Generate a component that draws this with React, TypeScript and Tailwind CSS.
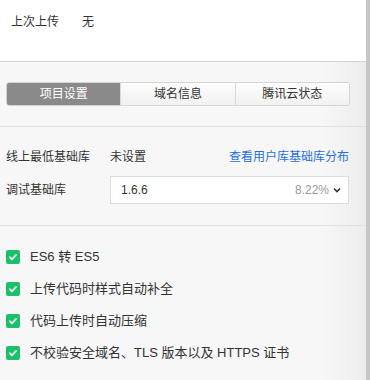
import React from 'react';

const font = { fontFamily: '"Liberation Sans", "Noto Sans CJK SC", sans-serif' };

const checks = [
  'ES6 转 ES5',
  '上传代码时样式自动补全',
  '代码上传时自动压缩',
  '不校验安全域名、TLS 版本以及 HTTPS 证书',
];

const CheckBox: React.FC = () => (
  <span className="flex h-[14px] w-[14px] shrink-0 items-center justify-center rounded-[2px] bg-[#1bc16a]">
    <svg width="10" height="10" viewBox="0 0 10 10" fill="none">
      <path d="M1.8 5.2 L4 7.3 L8.2 2.8" stroke="white" strokeWidth="1.6" strokeLinecap="round" strokeLinejoin="round" />
    </svg>
  </span>
);

export default function App() {
  return (
    <div className="flex h-[380px] w-[370px] overflow-hidden text-[#333]" style={font}>
      <div className="flex flex-1 flex-col">
        <div className="h-[62px] shrink-0 border-b border-[#d2d2d2] bg-white">
          <div className="flex items-center px-[11px] pt-[12px] text-[12px] leading-[20px]">
            <span className="w-[71px]">上次上传</span>
            <span>无</span>
          </div>
        </div>

        <div className="flex flex-1 flex-col bg-[linear-gradient(to_right,#f7f7f7_88%,#ececec)]">
          <div className="px-[6px] pb-[20px] pt-[20px]">
            <div className="flex h-[24px] w-[344px] overflow-hidden rounded-[3px] border border-[#d4d4d4] text-[12px]">
              <div className="flex flex-1 items-center justify-center bg-[#8a8a8a] text-white">项目设置</div>
              <div className="flex flex-1 items-center justify-center border-l border-[#d9d9d9] bg-[linear-gradient(to_bottom,#fdfdfd,#f1f1f1)]">域名信息</div>
              <div className="flex flex-1 items-center justify-center border-l border-[#d9d9d9] bg-[linear-gradient(to_bottom,#fdfdfd,#f1f1f1)]">腾讯云状态</div>
            </div>
          </div>

          <div className="border-t border-[#e0e0e0] px-[6px] pb-[21px] pt-[20px] text-[12px]">
            <div className="flex h-[20px] items-center">
              <span className="w-[104px]">线上最低基础库</span>
              <span>未设置</span>
              <span className="ml-auto mr-[11px] text-[#1f6fe0]">查看用户库基础库分布</span>
            </div>
            <div className="mt-[9px] flex h-[28px] items-center">
              <span className="w-[104px]">调试基础库</span>
              <div className="flex h-[28px] w-[239px] items-center border border-[#dcdcdc] bg-white pl-[10px] pr-[7px]">
                <span>1.6.6</span>
                <span className="ml-auto text-[#999]">8.22%</span>
                <svg className="ml-[4px]" width="8" height="6" viewBox="0 0 8 6" fill="none">
                  <path d="M1 1.5 L4 4.5 L7 1.5" stroke="#333" strokeWidth="1.6" />
                </svg>
              </div>
            </div>
          </div>

          <div className="flex flex-col border-t border-[#e0e0e0] px-[6px] pt-[15px] text-[13px]">
            {checks.map((c) => (
              <div key={c} className="flex h-[32px] items-center gap-[10px]">
                <CheckBox />
                <span>{c}</span>
              </div>
            ))}
          </div>
        </div>
      </div>
      <div className="w-[4px] shrink-0 bg-[#c6c6c6]" />
    </div>
  );
}
